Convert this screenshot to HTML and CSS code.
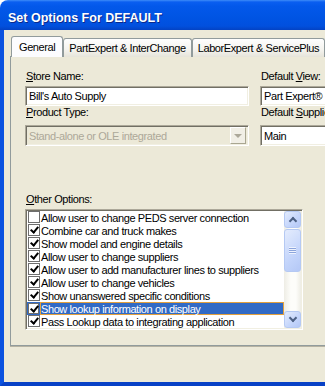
FILE: index.html
```html
<!DOCTYPE html>
<html lang="en">
<head>
    <meta charset="UTF-8">
    <title>Set Options For DEFAULT</title>
    <link rel="stylesheet" href="styles.css">
</head>
<body>

  <div class="window">

    <div class="titlebar">
      <span class="title">Set Options For DEFAULT</span>
    </div>

    <div class="frame">

      <div class="tabs">
        <div class="tab active">General</div>
        <div class="tab">PartExpert &amp; InterChange</div>
        <div class="tab">LaborExpert &amp; ServicePlus</div>
      </div>

      <div class="page">

        <div class="fields">
          <div class="col colLeft">
            <div class="lbl"><u>S</u>tore Name:</div>
            <div class="edit">Bill's Auto Supply</div>
            <div class="lbl"><u>P</u>roduct Type:</div>
            <div class="edit combo disabled">
              <span class="comboText">Stand-alone or OLE integrated</span>
              <span class="dropBtn"><span class="arrow"></span></span>
            </div>
          </div>
          <div class="col colRight">
            <div class="lbl">Default <u>V</u>iew:</div>
            <div class="edit">Part Expert&reg;</div>
            <div class="lbl">Default <u>S</u>upplier:</div>
            <div class="edit combo">Main</div>
          </div>
        </div>

        <div class="lbl other"><u>O</u>ther Options:</div>

        <div class="listbox">
          <div class="rows">
            <div class="row"><span class="cell"><span class="box"></span></span><span class="item">Allow user to change PEDS server connection</span></div>
            <div class="row"><span class="cell"><span class="box on"></span></span><span class="item">Combine car and truck makes</span></div>
            <div class="row"><span class="cell"><span class="box on"></span></span><span class="item">Show model and engine details</span></div>
            <div class="row"><span class="cell"><span class="box on"></span></span><span class="item">Allow user to change suppliers</span></div>
            <div class="row"><span class="cell"><span class="box on"></span></span><span class="item">Allow user to add manufacturer lines to suppliers</span></div>
            <div class="row"><span class="cell"><span class="box on"></span></span><span class="item">Allow user to change vehicles</span></div>
            <div class="row"><span class="cell"><span class="box on"></span></span><span class="item">Show unanswered specific conditions</span></div>
            <div class="row selected"><span class="cell"><span class="box on"></span></span><span class="item">Show lookup information on display</span></div>
            <div class="row"><span class="cell"><span class="box on"></span></span><span class="item">Pass Lookup data to integrating application</span></div>
          </div>
          <div class="scrollbar">
            <div class="sbBtn"><span class="chev up"></span></div>
            <div class="sbThumb"><span class="grip"></span></div>
            <div class="sbBtn down"><span class="chev dn"></span></div>
          </div>
        </div>

      </div>
    </div>
  </div>

</body>
</html>
```

FILE: styles.css
```css
body {
  margin: 0;
  overflow: hidden;
  background: #fff;
  font-family: "Liberation Sans", Arial, sans-serif;
}

.window {
  width: 470px;
  height: 386px;
}

/* barra de titulo */

.titlebar {
  box-sizing: border-box;
  height: 30px;
  padding: 4px 0 0 8px;
  line-height: 26px;
  border-radius: 8px 0 0 0;
  background: linear-gradient(#3d8cf8 0, #0a5ef0 2px, #0358ea 6px, #0054e3 18px, #0150de 26px, #0342c4 30px);
}

.title {
  color: #fff;
  font-weight: bold;
  font-size: 12.5px;
  text-shadow: 1px 1px 0 #0b2a8c;
}

.frame {
  box-sizing: border-box;
  height: 356px;
  padding: 7px 0 0 6px;
  background: #ece9d8;
  border-left: 4px solid #0b52e0;
  border-bottom: 4px solid #0841c6;
  font-size: 11px;
  letter-spacing: -0.4px;
  color: #000;
}

/* abas */

.tabs {
  display: flex;
  align-items: flex-end;
  padding-left: 1px;
  height: 20px;
  position: relative;
  z-index: 1;
  margin-bottom: -1px;
}

.tab {
  box-sizing: border-box;
  height: 19px;
  padding: 0 5px;
  line-height: 18px;
  border: 1px solid #919b9c;
  border-bottom: none;
  border-radius: 3px 3px 0 0;
  background: linear-gradient(#fefefe, #f4f3ee 60%, #e6e4da);
  white-space: nowrap;
}

.tab.active {
  height: 21px;
  padding: 0 7px;
  line-height: 21px;
  background: #fcfcfe;
  border-color: #919b9c;
}

/* pagina */

.page {
  box-sizing: border-box;
  height: 290px;
  padding: 13px 0 0 14px;
  border: 1px solid #919b9c;
  border-right: none;
  box-shadow: 0 1px 0 #b5b2a2;
  background: #ece9d8;
}

.fields {
  display: flex;
  gap: 11px;
}

.colLeft {
  width: 224px;
}

.colRight {
  width: 160px;
}

.lbl {
  height: 13px;
  line-height: 13px;
  padding-left: 1px;
  white-space: nowrap;
}

.edit {
  box-sizing: border-box;
  height: 20px;
  margin: 3px 0 0 0;
  padding: 0 3px;
  line-height: 19px;
  background: #fff;
  border: 1px solid;
  border-color: #aca899 #fff #fff #aca899;
  box-shadow: inset 1px 1px 0 #716f64, inset -1px -1px 0 #f1efe2;
  white-space: nowrap;
  overflow: hidden;
}

.combo {
  height: 21px;
  margin-top: 6px;
  line-height: 20px;
}

.combo.disabled {
  display: flex;
  justify-content: space-between;
  background: #ece9d8;
  color: #aca899;
  padding-right: 2px;
}

.dropBtn {
  box-sizing: border-box;
  width: 16px;
  height: 17px;
  margin-top: 1px;
  display: flex;
  align-items: center;
  justify-content: center;
  background: #f1efe6;
  border: 1px solid;
  border-color: #fff #a9a691 #a9a691 #fff;
}

.arrow {
  width: 0;
  height: 0;
  border-left: 4px solid transparent;
  border-right: 4px solid transparent;
  border-top: 4px solid #aca899;
}

.other {
  margin-top: 47px;
}

/* lista de opcoes */

.listbox {
  box-sizing: border-box;
  display: flex;
  width: 278px;
  height: 121px;
  margin-top: 3px;
  background: #fff;
  border: 1px solid;
  border-color: #aca899 #fff #fff #aca899;
  box-shadow: inset 1px 1px 0 #716f64, inset -1px -1px 0 #f1efe2;
  padding: 1px;
}

.rows {
  flex: 1;
}

.row {
  display: flex;
  height: 13px;
  line-height: 11px;
}

.cell {
  width: 13px;
  height: 13px;
  display: flex;
  align-items: flex-start;
  justify-content: center;
}

.box {
  box-sizing: border-box;
  position: relative;
  width: 12px;
  height: 12px;
  background: #fff;
  border: 1px solid #6e6e6e;
}

.box.on::after {
  content: "";
  position: absolute;
  left: 3px;
  top: 0px;
  width: 3px;
  height: 6px;
  border: solid #000;
  border-width: 0 2px 2px 0;
  transform: rotate(40deg);
}

.item {
  flex: 1;
  box-sizing: border-box;
  height: 13px;
  line-height: 12px;
  border: 1px solid transparent;
  white-space: nowrap;
}

.row.selected .cell {
  background: #316ac5;
  align-items: center;
}

.row.selected .box {
  width: 11px;
  height: 11px;
}

.row.selected .item {
  background: #316ac5;
  border-color: #e2a03e;
  color: #fff;
}

/* barra de rolagem */

.scrollbar {
  width: 17px;
  display: flex;
  flex-direction: column;
  background: linear-gradient(90deg, #eeede5, #fdfdfa 40%, #fdfdfa 70%, #eeede5);
}

.sbBtn, .sbThumb {
  box-sizing: border-box;
  width: 17px;
  height: 17px;
  border: 1px solid #b5c9f3;
  border-radius: 3px;
  background: linear-gradient(135deg, #e4ecfd, #c4d5fb 60%, #b4c8f6);
  display: flex;
  align-items: center;
  justify-content: center;
}

.sbThumb {
  height: 43px;
  margin-top: 1px;
}

.sbBtn.down {
  margin-top: auto;
}

.chev {
  width: 4px;
  height: 4px;
  border: solid #4d6185;
  border-width: 2px 2px 0 0;
}

.chev.up {
  transform: rotate(-45deg);
  margin-top: 3px;
}

.chev.dn {
  transform: rotate(135deg);
  margin-top: -3px;
}

.grip {
  width: 7px;
  height: 7px;
  background: repeating-linear-gradient(#eef3fe 0, #eef3fe 1px, #8ca5dc 1px, #8ca5dc 2px);
}
```
